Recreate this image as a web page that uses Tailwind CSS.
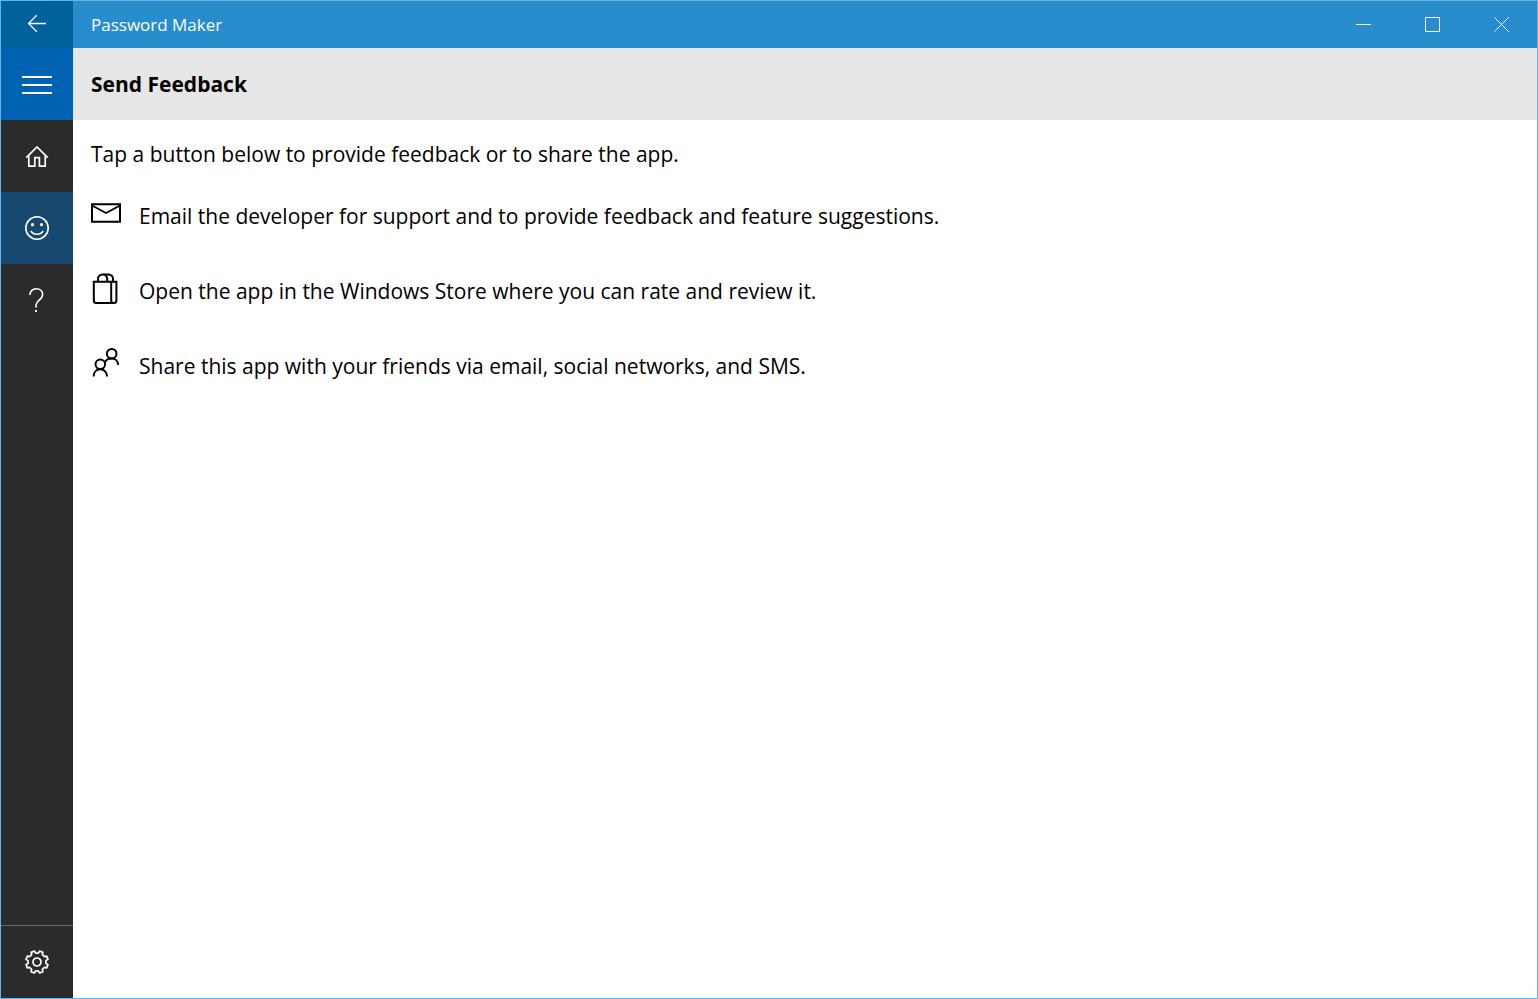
<!DOCTYPE html>
<html lang="en">

<head>
  <meta charset="UTF-8" />
  <meta name="viewport" content="width=device-width, initial-scale=1.0" />
  <title>Password Maker</title>
  <script src="https://cdn.jsdelivr.net/npm/@tailwindcss/browser@4"></script>
</head>

<body class="min-h-screen flex flex-col border border-[#62b5e9] bg-white text-black font-['Open_Sans','Noto_Sans',sans-serif]">
  <!-- Title bar -->
  <div class="flex h-[47px] bg-[#288dcd] text-white">
    <button aria-label="Back" class="flex items-center justify-center w-[72px] bg-[#00619a]">
      <svg class="w-5 h-[21px]" fill="none" viewBox="0 0 20 21" stroke="currentColor" stroke-width="1.3">
        <path d="M19 9.500H1.500M9.800 1.200L1.500 9.500l8.300 8.300" />
      </svg>
    </button>
    <div class="flex-1 flex items-center px-[18px] text-[17px]">Password Maker</div>
    <button aria-label="Minimize" class="flex items-center justify-center w-[69px]">
      <svg class="w-[15px] h-[15px]" fill="none" viewBox="0 0 15 15" stroke="currentColor"><path d="M0 7.500h15" /></svg>
    </button>
    <button aria-label="Maximize" class="flex items-center justify-center w-[69px]">
      <svg class="w-[15px] h-[15px]" fill="none" viewBox="0 0 15 15" stroke="currentColor"><path d="M.5 .5h14v14H.5z" /></svg>
    </button>
    <button aria-label="Close" class="flex items-center justify-center w-[69px] mr-px">
      <svg class="w-[15px] h-[15px]" fill="none" viewBox="0 0 15 15" stroke="currentColor"><path d="M0 0l15 15M15 0L0 15" /></svg>
    </button>
  </div>

  <div class="flex-1 flex">
    <!-- Side menu -->
    <nav class="flex flex-col w-[72px] bg-[#2b2b2b] text-white">
      <button aria-label="Menu" class="flex items-center justify-center h-[72px] bg-[#0063b1]">
        <svg class="w-[30px] h-5" fill="none" viewBox="0 0 30 20" stroke="currentColor" stroke-width="2">
          <path d="M0 3h30M0 11h30M0 19h30" />
        </svg>
      </button>
      <a href="#home" aria-label="Home" class="flex items-center justify-center h-[72px]">
        <svg class="w-6 h-6" fill="none" viewBox="0 0 24 24" stroke="currentColor" stroke-width="1.7">
          <path d="M1.300 13.600L12 2.900l10.700 10.700M3.800 11.500v10.700h6v-8.500h4.600v8.500h5.800V11.500" />
        </svg>
      </a>
      <a href="#feedback" aria-label="Send Feedback" class="flex items-center justify-center h-[72px] bg-[#174970]">
        <svg class="w-6 h-6" fill="none" viewBox="0 0 24 24" stroke="currentColor" stroke-width="1.6">
          <circle cx="12" cy="12" r="11.200" />
          <path d="M5.800 15c2.800 4.300 9.600 4.300 12.400 0" />
          <circle cx="7.500" cy="8.700" r="1.600" fill="currentColor" stroke="none" />
          <circle cx="16.500" cy="8.700" r="1.600" fill="currentColor" stroke="none" />
        </svg>
      </a>
      <a href="#help" aria-label="Help" class="flex items-center justify-center h-[72px]">
        <svg class="w-6 h-6" fill="none" viewBox="0 0 24 24" stroke="currentColor" stroke-width="1.6">
          <path d="M4.800 7c0-3.600 2.700-6.200 6.500-6.200s6.300 2.500 6.300 5.700c0 5.200-6.600 6-6.600 10.800v2.200" />
          <path d="M10 22v2h2v-2z" fill="currentColor" stroke="none" />
        </svg>
      </a>
      <a href="#settings" aria-label="Settings" class="mt-auto flex items-center justify-center h-[73px] border-t border-[#6b6b6b]">
        <svg class="w-6 h-6" fill="none" viewBox="-12 -12 24 24" stroke="currentColor" stroke-width="1.7" stroke-linejoin="round">
          <path d="M9.070 -1.520Q8.600 0 9.070 1.520L10.990 2.640L9.640 5.900L7.490 5.340Q6.200 6.200 5.340 7.490L5.900 9.640L2.640 10.990L1.520 9.070Q0 8.600 -1.520 9.070L-2.640 10.990L-5.900 9.640L-5.340 7.490Q-6.200 6.200 -7.490 5.340L-9.640 5.900L-10.990 2.640L-9.070 1.520Q-8.600 0 -9.070 -1.520L-10.990 -2.640L-9.640 -5.900L-7.490 -5.340Q-6.200 -6.200 -5.340 -7.490L-5.900 -9.640L-2.640 -10.990L-1.520 -9.070Q0 -8.600 1.520 -9.070L2.640 -10.990L5.900 -9.640L5.340 -7.490Q6.200 -6.200 7.490 -5.340L9.640 -5.900L10.990 -2.640z" />
          <circle r="4" />
        </svg>
      </a>
    </nav>

    <main class="flex-1">
      <div class="flex items-center h-[72px] px-[18px] bg-[#e6e6e6]">
        <h1 class="text-[21px] leading-8 font-bold">Send Feedback</h1>
      </div>

      <div class="px-[18px] pt-[18px] text-[21px] leading-8">
        <p>Tap a button below to provide feedback or to share the app.</p>

        <div class="mt-[30px] flex flex-col items-start gap-[43px]">
          <button class="flex items-center gap-[18px] text-left">
            <svg class="w-[30px] h-8 shrink-0" fill="none" viewBox="0 1 30 32" stroke="currentColor" stroke-width="2">
              <path d="M1 5.300h28v17.400H1z" />
              <path d="M1 6.500l14 7.500 14-7.500" stroke-width="1.800" />
            </svg>
            Email the developer for support and to provide feedback and feature suggestions.
          </button>
          <button class="flex items-center gap-[18px] text-left">
            <svg class="w-[30px] h-8 shrink-0 overflow-visible" fill="none" viewBox="0 0 30 32" stroke="currentColor" stroke-width="2">
              <path d="M2.800 6.700h22.600v18.800a2.500 2.500 0 0 1-2.500 2.500H5.300a2.500 2.500 0 0 1-2.500-2.500z" />
              <path d="M20.200 7v18.500a2.500 2.500 0 0 0 2.500 2.500M7 7V4a4.600 4.600 0 0 1 9.200 0V7M12.200 -.5h5.300a4.500 4.500 0 0 1 4.500 4.500V7" />
            </svg>
            Open the app in the Windows Store where you can rate and review it.
          </button>
          <button class="flex items-center gap-[18px] text-left">
            <svg class="w-[30px] h-8 shrink-0 overflow-visible" fill="none" viewBox="0 1 30 32" stroke="currentColor" stroke-width="2">
              <circle cx="20.700" cy="4.700" r="4.800" />
              <circle cx="9.300" cy="15.300" r="4.800" />
              <path d="M2.600 27.500c0-4.200 2.800-7.200 6.700-7.200s6.800 3 6.800 7.200M14 13.500c.8-2.500 3.400-4 6.700-4 3.800 0 6.400 2.800 6.400 6.500" />
            </svg>
            Share this app with your friends via email, social networks, and SMS.
          </button>
        </div>
      </div>
    </main>
  </div>
</body>

</html>
